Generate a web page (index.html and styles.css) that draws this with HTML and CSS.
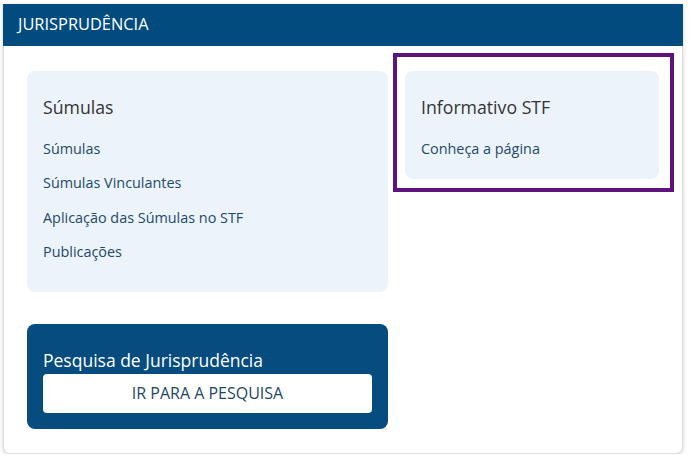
FILE: index.html
```html
<!DOCTYPE html>
<html lang="pt-BR">
<head>
    <meta charset="UTF-8">
    <title>Jurisprudência</title>
    <link rel="stylesheet" href="styles.css">
</head>
<body>
    <div class="painel">
        <div class="painel-titulo">JURISPRUDÊNCIA</div>
        <div class="painel-corpo">
            <div class="coluna">
                <div class="bloco">
                    <h3>Súmulas</h3>
                    <ul>
                        <li><a href="#">Súmulas</a></li>
                        <li><a href="#">Súmulas Vinculantes</a></li>
                        <li><a href="#">Aplicação das Súmulas no STF</a></li>
                        <li><a href="#">Publicações</a></li>
                    </ul>
                </div>
                <div class="bloco bloco-escuro">
                    <h3>Pesquisa de Jurisprudência</h3>
                    <a class="botao" href="#">IR PARA A PESQUISA</a>
                </div>
            </div>
            <div class="coluna">
                <div class="foco">
                    <div class="bloco">
                        <h3>Informativo STF</h3>
                        <ul>
                            <li><a href="#">Conheça a página</a></li>
                        </ul>
                    </div>
                </div>
            </div>
        </div>
    </div>
</body>
</html>
```

FILE: styles.css
```css
body {
    margin: 0;
    padding: 4px 11px 0 3px;
    font-family: 'Open Sans', 'Noto Sans', sans-serif;
    background: #fff;
}
.painel {
    border: 1px solid #dcdcdc;
    border-top: 0;
    border-radius: 0 0 7px 7px;
    box-shadow: 0 1px 4px rgba(0, 0, 0, 0.18);
}
.painel-titulo {
    background: #024b7e;
    color: #fff;
    font-size: 16.4px;
    height: 42px;
    line-height: 40px;
    padding-left: 15px;
    margin: 0 -1px;
}
.painel-corpo {
    display: grid;
    grid-template-columns: 361px 254px;
    column-gap: 17px;
    padding: 25px 23px 24px 23px;
    align-items: start;
}
.coluna {
    display: flex;
    flex-direction: column;
    gap: 32px;
}
.bloco {
    background: #edf3fb;
    border-radius: 8px;
    padding: 24px 16px 20px;
}
.bloco h3 {
    margin: 0 0 20px;
    font-size: 17.7px;
    font-weight: 400;
    line-height: 24px;
    color: #333;
}
.bloco ul {
    list-style: none;
    margin: 0;
    padding: 0;
}
.bloco li {
    line-height: 20px;
    margin-bottom: 14.4px;
    font-size: 14.4px;
}
.bloco li:last-child {
    margin-bottom: 10px;
}
.foco .bloco li:last-child {
    margin-bottom: 0;
}
.bloco a {
    color: #1c4a6c;
    text-decoration: none;
}
.bloco-escuro {
    background: #064c7f;
    padding: 24px 16px 16px;
}
.bloco-escuro h3 {
    color: #fff;
    font-size: 17.5px;
    margin: 0 0 2px;
    line-height: 24px;
}
.bloco-escuro .botao {
    display: block;
    background: #fff;
    border-radius: 4px;
    height: 39px;
    line-height: 39px;
    text-align: center;
    font-size: 16px;
    color: #1d4667;
}
.foco {
    border: 4px solid #5d127d;
    margin: -18px -15px 0 -12px;
    padding: 14px 11px 9px 8px;
}
```
